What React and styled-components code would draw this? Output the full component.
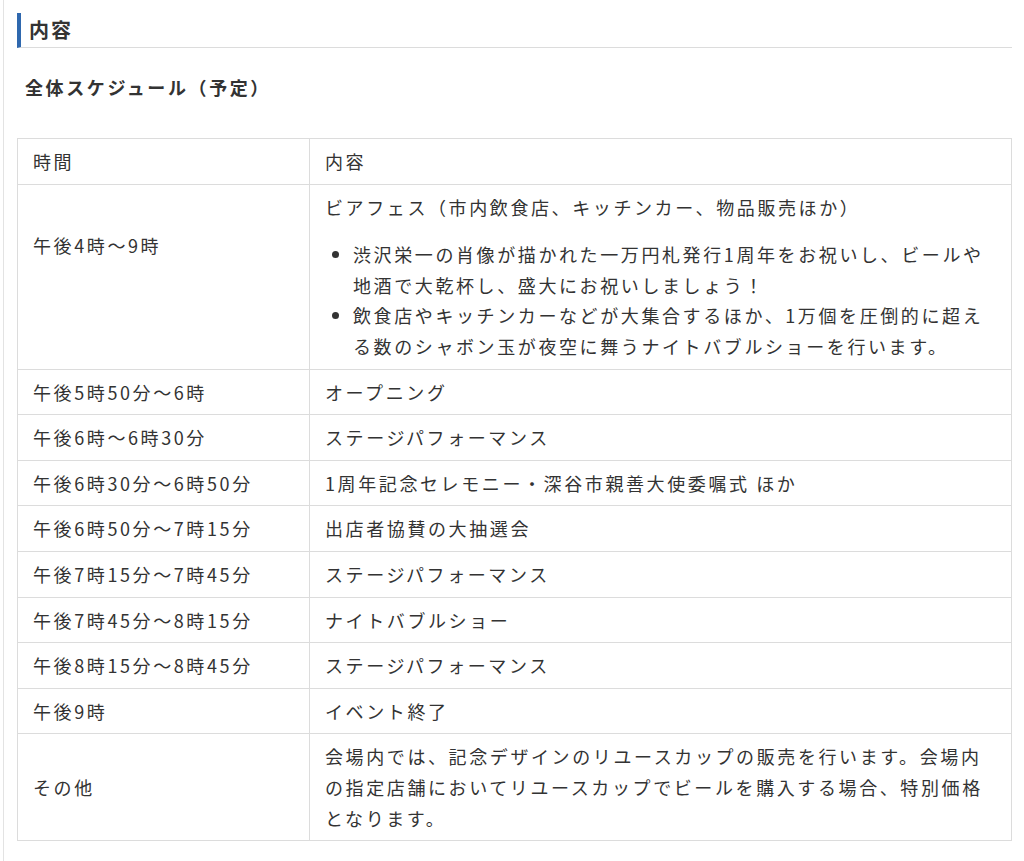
import React from 'react'
import styled, { createGlobalStyle } from 'styled-components'

const GlobalStyle = createGlobalStyle`
  body {
    margin: 0;
    background: #fff;
    color: #333;
    font-family: "Noto Sans CJK JP", "Noto Sans", sans-serif;
  }
`

const Page = styled.div`
  margin-left: 3px;
  min-height: 861px;
  border-left: 1px solid #e3e3e3;
  padding: 13px 12px 20px 13px;
  box-sizing: border-box;
  letter-spacing: 2.6px;
`

const Heading = styled.h2`
  margin: 0;
  font-size: 20px;
  font-weight: 700;
  line-height: 34px;
  padding-left: 8px;
  letter-spacing: 2px;
  border-left: 4px solid #2f68ae;
  border-bottom: 1px solid #dcdcdc;
  color: #333;
`

const SubHeading = styled.h3`
  margin: 24px 0 0 8px;
  font-size: 18px;
  font-weight: 700;
  line-height: 30px;
  letter-spacing: 2.6px;
`

const Table = styled.table`
  margin-top: 36px;
  width: 995px;
  border-collapse: collapse;
  font-size: 18px;
  line-height: 30.6px;
`

const Cell = styled.td`
  border: 1px solid #dcdcdc;
  padding: 7px 15px ${(p) => (p.$lift ? '69px' : '7px')};
  vertical-align: middle;
  text-align: left;
  font-weight: 400;
  width: ${(p) => (p.$time ? '261px' : 'auto')};
`

const Para = styled.p`
  margin: 0 0 17px;
`

const List = styled.ul`
  margin: 0;
  padding-left: 28px;
  list-style: disc;
`

const schedule = [
  ['午後5時50分〜6時', 'オープニング'],
  ['午後6時〜6時30分', 'ステージパフォーマンス'],
  ['午後6時30分〜6時50分', '1周年記念セレモニー・深谷市親善大使委嘱式 ほか'],
  ['午後6時50分〜7時15分', '出店者協賛の大抽選会'],
  ['午後7時15分〜7時45分', 'ステージパフォーマンス'],
  ['午後7時45分〜8時15分', 'ナイトバブルショー'],
  ['午後8時15分〜8時45分', 'ステージパフォーマンス'],
  ['午後9時', 'イベント終了'],
]

export default function App() {
  return (
    <>
      <GlobalStyle />
      <Page>
        <Heading>内容</Heading>
        <SubHeading>全体スケジュール（予定）</SubHeading>
        <Table>
          <tbody>
            <tr>
              <Cell as="th" $time>時間</Cell>
              <Cell as="th">内容</Cell>
            </tr>
            <tr>
              <Cell $time $lift>午後4時〜9時</Cell>
              <Cell>
                <Para>ビアフェス（市内飲食店、キッチンカー、物品販売ほか）</Para>
                <List>
                  <li>渋沢栄一の肖像が描かれた一万円札発行1周年をお祝いし、ビールや地酒で大乾杯し、盛大にお祝いしましょう！</li>
                  <li>飲食店やキッチンカーなどが大集合するほか、1万個を圧倒的に超える数のシャボン玉が夜空に舞うナイトバブルショーを行います。</li>
                </List>
              </Cell>
            </tr>
            {schedule.map(([time, text], i) => (
              <tr key={i}>
                <Cell $time>{time}</Cell>
                <Cell>{text}</Cell>
              </tr>
            ))}
            <tr>
              <Cell $time>その他</Cell>
              <Cell>会場内では、記念デザインのリユースカップの販売を行います。会場内の指定店舗においてリユースカップでビールを購入する場合、特別価格となります。</Cell>
            </tr>
          </tbody>
        </Table>
      </Page>
    </>
  )
}
